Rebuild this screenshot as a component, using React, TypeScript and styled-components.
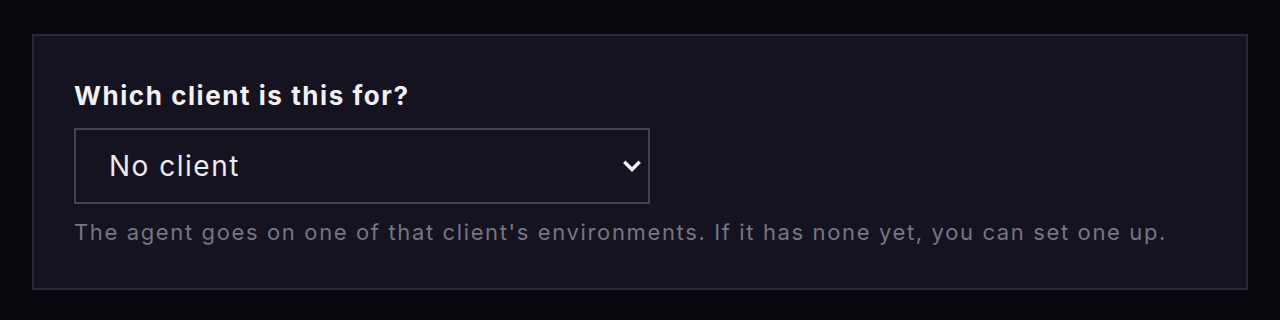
import React from 'react';
import styled, { createGlobalStyle } from 'styled-components';

const GlobalStyle = createGlobalStyle`
	html, body {
		margin: 0;
		padding: 0;
		background: #09080e;
		font-family: Inter, 'Noto Sans', sans-serif;
	}
`;

const Page = styled.div`
	padding: 34px 32px 30px;
`;

const Card = styled.section`
	background: #14131f;
	border: 2px solid #29283a;
	padding: 44px 40px 42px;
	display: flex;
	flex-direction: column;
`;

const Label = styled.label`
	color: #f1f0f5;
	font-size: 26px;
	font-weight: 700;
	line-height: 32px;
	letter-spacing: 1.55px;
	margin-bottom: 16px;
`;

const SelectWrap = styled.div`
	position: relative;
	width: 576px;
`;

const Select = styled.select`
	appearance: none;
	width: 100%;
	height: 76px;
	background: #14131f;
	border: 2px solid #45435a;
	border-radius: 0;
	color: #eceaf2;
	font-family: inherit;
	font-size: 28px;
	padding: 0 60px 0 33px;
	letter-spacing: 1.5px;
	outline: none;
`;

const Chevron = styled.svg`
	position: absolute;
	right: 7px;
	top: 50%;
	transform: translateY(-50%);
	pointer-events: none;
`;

const Help = styled.p`
	margin: 14px 0 0;
	color: #777585;
	font-size: 22px;
	line-height: 28px;
	letter-spacing: 1.63px;
`;

export default function App() {
	return (
		<Page>
			<GlobalStyle />
			<Card>
				<Label htmlFor='client'>Which client is this for?</Label>
				<SelectWrap>
					<Select id='client' defaultValue='none'>
						<option value='none'>No client</option>
					</Select>
					<Chevron width='22' height='22' viewBox='0 0 22 22' fill='none'>
						<path d='M4.5 8l6.5 6.5 6.5-6.5' stroke='#f4f3f8' strokeWidth='3.4' strokeLinecap='square' />
					</Chevron>
				</SelectWrap>
				<Help>
					The agent goes on one of that client's environments. If it has none yet, you can set one up.
				</Help>
			</Card>
		</Page>
	);
}
